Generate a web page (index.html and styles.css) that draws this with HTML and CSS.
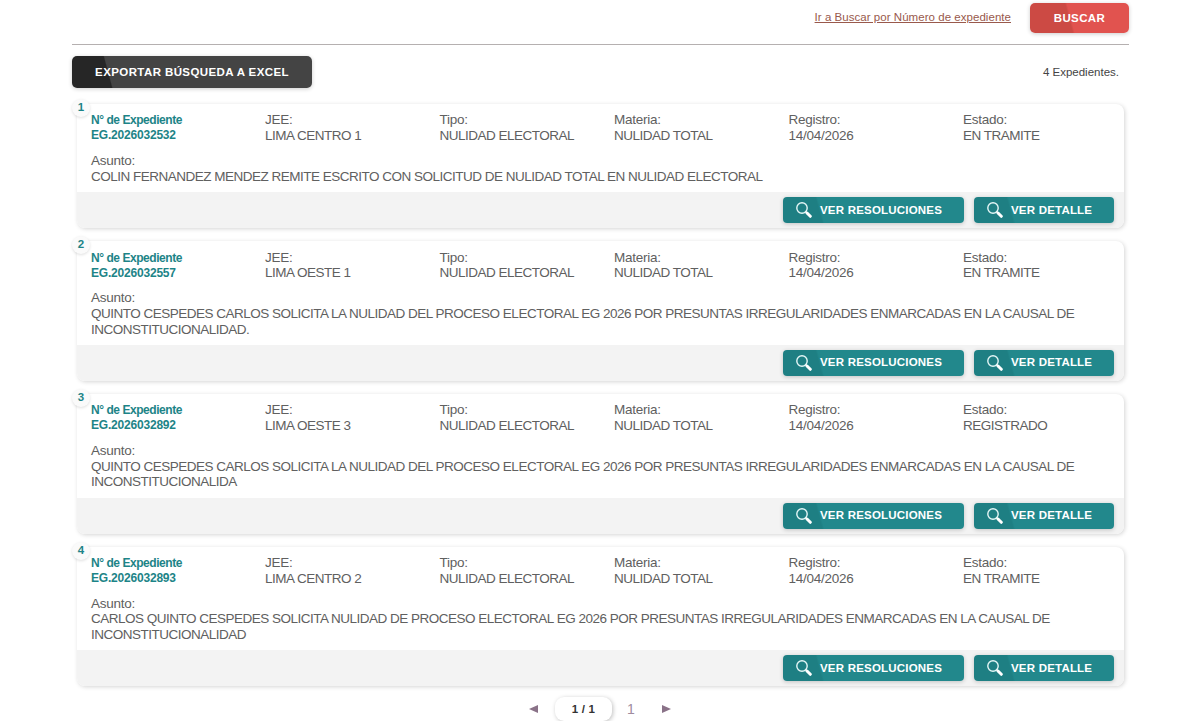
FILE: index.html
```
<!DOCTYPE html>
<html lang="es">
<head>
    <meta charset="UTF-8">
    <meta name="viewport" content="width=device-width, initial-scale=1.0">
    <title>Búsqueda de expedientes</title>
    <link rel="stylesheet" href="styles.css">
</head>
<body>
    <!-- Icono compartido de lupa -->
    <svg class="sprite" width="0" height="0">
        <symbol id="lupa" viewBox="0 0 16 16">
            <circle cx="6" cy="6" r="5.2" fill="none" stroke="#e4f6f6" stroke-width="1.4"/>
            <path d="M9.6 9.6l1.6 1.6" stroke="#fff" stroke-width="1.4"/>
            <path d="M11 11l3.3 3.3" stroke="#fff" stroke-width="3" stroke-linecap="round"/>
        </symbol>
    </svg>

    <div class="container">
        <div class="search-bar">
            <a href="#" class="search-link">Ir a Buscar por Número de expediente</a>
            <button class="btn btn-search">BUSCAR</button>
        </div>

        <div class="toolbar">
            <button class="btn btn-export">EXPORTAR BÚSQUEDA A EXCEL</button>
            <span class="total">4 Expedientes.</span>
        </div>

        <!-- Lista de expedientes -->
        <div class="card">
            <span class="number">1</span>
            <div class="card-body">
                <div class="fields">
                    <div class="code">N° de Expediente<br>EG.2026032532</div>
                    <div>JEE:<br>LIMA CENTRO 1</div>
                    <div>Tipo:<br>NULIDAD ELECTORAL</div>
                    <div>Materia:<br>NULIDAD TOTAL</div>
                    <div class="date">Registro:<br>14/04/2026</div>
                    <div>Estado:<br>EN TRAMITE</div>
                </div>
                <div class="subject">Asunto:<br>COLIN FERNANDEZ MENDEZ REMITE ESCRITO CON SOLICITUD DE NULIDAD TOTAL EN NULIDAD ELECTORAL</div>
            </div>
            <div class="card-footer">
                <button class="btn btn-view btn-res"><svg class="icon"><use href="#lupa"/></svg>VER RESOLUCIONES</button>
                <button class="btn btn-view btn-det"><svg class="icon"><use href="#lupa"/></svg>VER DETALLE</button>
            </div>
        </div>

        <div class="card">
            <span class="number">2</span>
            <div class="card-body">
                <div class="fields">
                    <div class="code">N° de Expediente<br>EG.2026032557</div>
                    <div>JEE:<br>LIMA OESTE 1</div>
                    <div>Tipo:<br>NULIDAD ELECTORAL</div>
                    <div>Materia:<br>NULIDAD TOTAL</div>
                    <div class="date">Registro:<br>14/04/2026</div>
                    <div>Estado:<br>EN TRAMITE</div>
                </div>
                <div class="subject">Asunto:<br>QUINTO CESPEDES CARLOS SOLICITA LA NULIDAD DEL PROCESO ELECTORAL EG 2026 POR PRESUNTAS IRREGULARIDADES ENMARCADAS EN LA CAUSAL DE<br>INCONSTITUCIONALIDAD.</div>
            </div>
            <div class="card-footer">
                <button class="btn btn-view btn-res"><svg class="icon"><use href="#lupa"/></svg>VER RESOLUCIONES</button>
                <button class="btn btn-view btn-det"><svg class="icon"><use href="#lupa"/></svg>VER DETALLE</button>
            </div>
        </div>

        <div class="card">
            <span class="number">3</span>
            <div class="card-body">
                <div class="fields">
                    <div class="code">N° de Expediente<br>EG.2026032892</div>
                    <div>JEE:<br>LIMA OESTE 3</div>
                    <div>Tipo:<br>NULIDAD ELECTORAL</div>
                    <div>Materia:<br>NULIDAD TOTAL</div>
                    <div class="date">Registro:<br>14/04/2026</div>
                    <div>Estado:<br>REGISTRADO</div>
                </div>
                <div class="subject">Asunto:<br>QUINTO CESPEDES CARLOS SOLICITA LA NULIDAD DEL PROCESO ELECTORAL EG 2026 POR PRESUNTAS IRREGULARIDADES ENMARCADAS EN LA CAUSAL DE<br>INCONSTITUCIONALIDA</div>
            </div>
            <div class="card-footer">
                <button class="btn btn-view btn-res"><svg class="icon"><use href="#lupa"/></svg>VER RESOLUCIONES</button>
                <button class="btn btn-view btn-det"><svg class="icon"><use href="#lupa"/></svg>VER DETALLE</button>
            </div>
        </div>

        <div class="card">
            <span class="number">4</span>
            <div class="card-body">
                <div class="fields">
                    <div class="code">N° de Expediente<br>EG.2026032893</div>
                    <div>JEE:<br>LIMA CENTRO 2</div>
                    <div>Tipo:<br>NULIDAD ELECTORAL</div>
                    <div>Materia:<br>NULIDAD TOTAL</div>
                    <div class="date">Registro:<br>14/04/2026</div>
                    <div>Estado:<br>EN TRAMITE</div>
                </div>
                <div class="subject">Asunto:<br>CARLOS QUINTO CESPEDES SOLICITA NULIDAD DE PROCESO ELECTORAL EG 2026 POR PRESUNTAS IRREGULARIDADES ENMARCADAS EN LA CAUSAL DE<br>INCONSTITUCIONALIDAD</div>
            </div>
            <div class="card-footer">
                <button class="btn btn-view btn-res"><svg class="icon"><use href="#lupa"/></svg>VER RESOLUCIONES</button>
                <button class="btn btn-view btn-det"><svg class="icon"><use href="#lupa"/></svg>VER DETALLE</button>
            </div>
        </div>

        <!-- Paginación -->
        <div class="pagination">
            <span class="arrow arrow-prev"></span>
            <span class="current">1 / 1</span>
            <a class="page">1</a>
            <span class="arrow arrow-next"></span>
        </div>
    </div>
</body>
</html>
```
FILE: styles.css
```
body {
    margin: 0;
    background-color: #fff;
    font-family: "Liberation Sans", Arial, sans-serif;
    font-size: 14px;
    color: #606060;
    overflow: hidden;
}

.sprite {
    position: absolute;
}

.container {
    width: 1057px;
    margin-left: 72px;
}

/* Botones */
.btn {
    display: flex;
    align-items: center;
    justify-content: center;
    box-sizing: border-box;
    padding: 0 0 1px;
    border: none;
    border-radius: 5px;
    color: #fff;
    font-family: inherit;
    font-size: 11.5px;
    font-weight: bold;
    letter-spacing: 0.4px;
    white-space: nowrap;
    box-shadow: 0 1px 4px rgba(0, 0, 0, 0.2);
}

.btn-search {
    width: 99px;
    height: 30px;
    background: linear-gradient(75deg, #cc4a44 40%, #e1534f 42%);
}

.btn-export {
    width: 240px;
    height: 32px;
    background: linear-gradient(75deg, #262626 16%, #444 16.5%);
}

.btn-view {
    height: 26px;
    justify-content: flex-start;
    padding-left: 13px;
    border-radius: 4px;
    background: linear-gradient(75deg, #1e7f83 38px, #22888c 40px);
    letter-spacing: 0.2px;
}

.btn-res {
    width: 181px;
}

.btn-det {
    width: 140px;
}

.icon {
    width: 16px;
    height: 16px;
    margin: 1px 8px 0 0;
}

/* Cabecera */
.search-bar {
    display: flex;
    justify-content: flex-end;
    align-items: flex-start;
    gap: 19px;
    height: 41px;
    padding-top: 3px;
    border-bottom: 1px solid #b5b0b0;
}

.search-link {
    margin-top: 8px;
    color: #99594c;
    font-size: 11.5px;
    letter-spacing: 0.04px;
}

.toolbar {
    display: flex;
    justify-content: space-between;
    align-items: center;
    margin: 11px 10px 16px 0;
}

.total {
    color: #444;
    font-size: 11.5px;
}

/* Tarjetas */
.card {
    position: relative;
    width: 1047px;
    margin: 0 0 13px 5px;
    border-radius: 8px;
    background-color: #fff;
    box-shadow: 1px 1px 4px rgba(0, 0, 0, 0.17);
}

.number {
    position: absolute;
    top: -5px;
    left: -5px;
    width: 18px;
    height: 18px;
    border-radius: 50%;
    background-color: #fafafa;
    box-shadow: 0 1px 3px rgba(0, 0, 0, 0.13);
    color: #1d8487;
    font-size: 11.5px;
    font-weight: bold;
    line-height: 17px;
    text-align: center;
}

.card-body {
    padding: 8.4px 14px 7.8px;
    font-size: 13.5px;
    line-height: 15.6px;
    letter-spacing: -0.5px;
}

.fields {
    display: grid;
    grid-template-columns: 174px repeat(5, 174.5px);
    margin-bottom: 9.6px;
}

.fields div::first-line,
.subject::first-line {
    letter-spacing: -0.25px;
}

.fields .date {
    letter-spacing: -0.25px;
}

.code {
    padding-top: 1px;
    color: #1d8487;
    font-size: 12px;
    font-weight: bold;
    line-height: 15px;
    letter-spacing: -0.2px;
}

.fields .code::first-line {
    letter-spacing: -0.45px;
}

.subject {
    white-space: nowrap;
}

.card-footer {
    display: flex;
    justify-content: flex-end;
    gap: 10px;
    padding: 5px 10px;
    border-radius: 0 0 8px 8px;
    background-color: #f3f3f3;
}

/* Paginación */
.pagination {
    display: flex;
    align-items: center;
    margin: -2px 0 0 457px;
}

.arrow {
    border: 4.5px solid transparent;
}

.arrow-prev {
    border-left-width: 0;
    border-right: 9px solid #8a7288;
}

.arrow-next {
    border-right-width: 0;
    border-left: 9px solid #8a7288;
}

.current {
    width: 57px;
    margin: 0 16px 0 17px;
    border-radius: 9px;
    box-shadow: 1px 1px 4px rgba(0, 0, 0, 0.25);
    color: #333;
    font-size: 11.5px;
    font-weight: bold;
    line-height: 24px;
    letter-spacing: 0.2px;
    text-align: center;
}

.page {
    width: 7px;
    margin: 0 28px 0 -1px;
    color: #a08c9e;
}
```
